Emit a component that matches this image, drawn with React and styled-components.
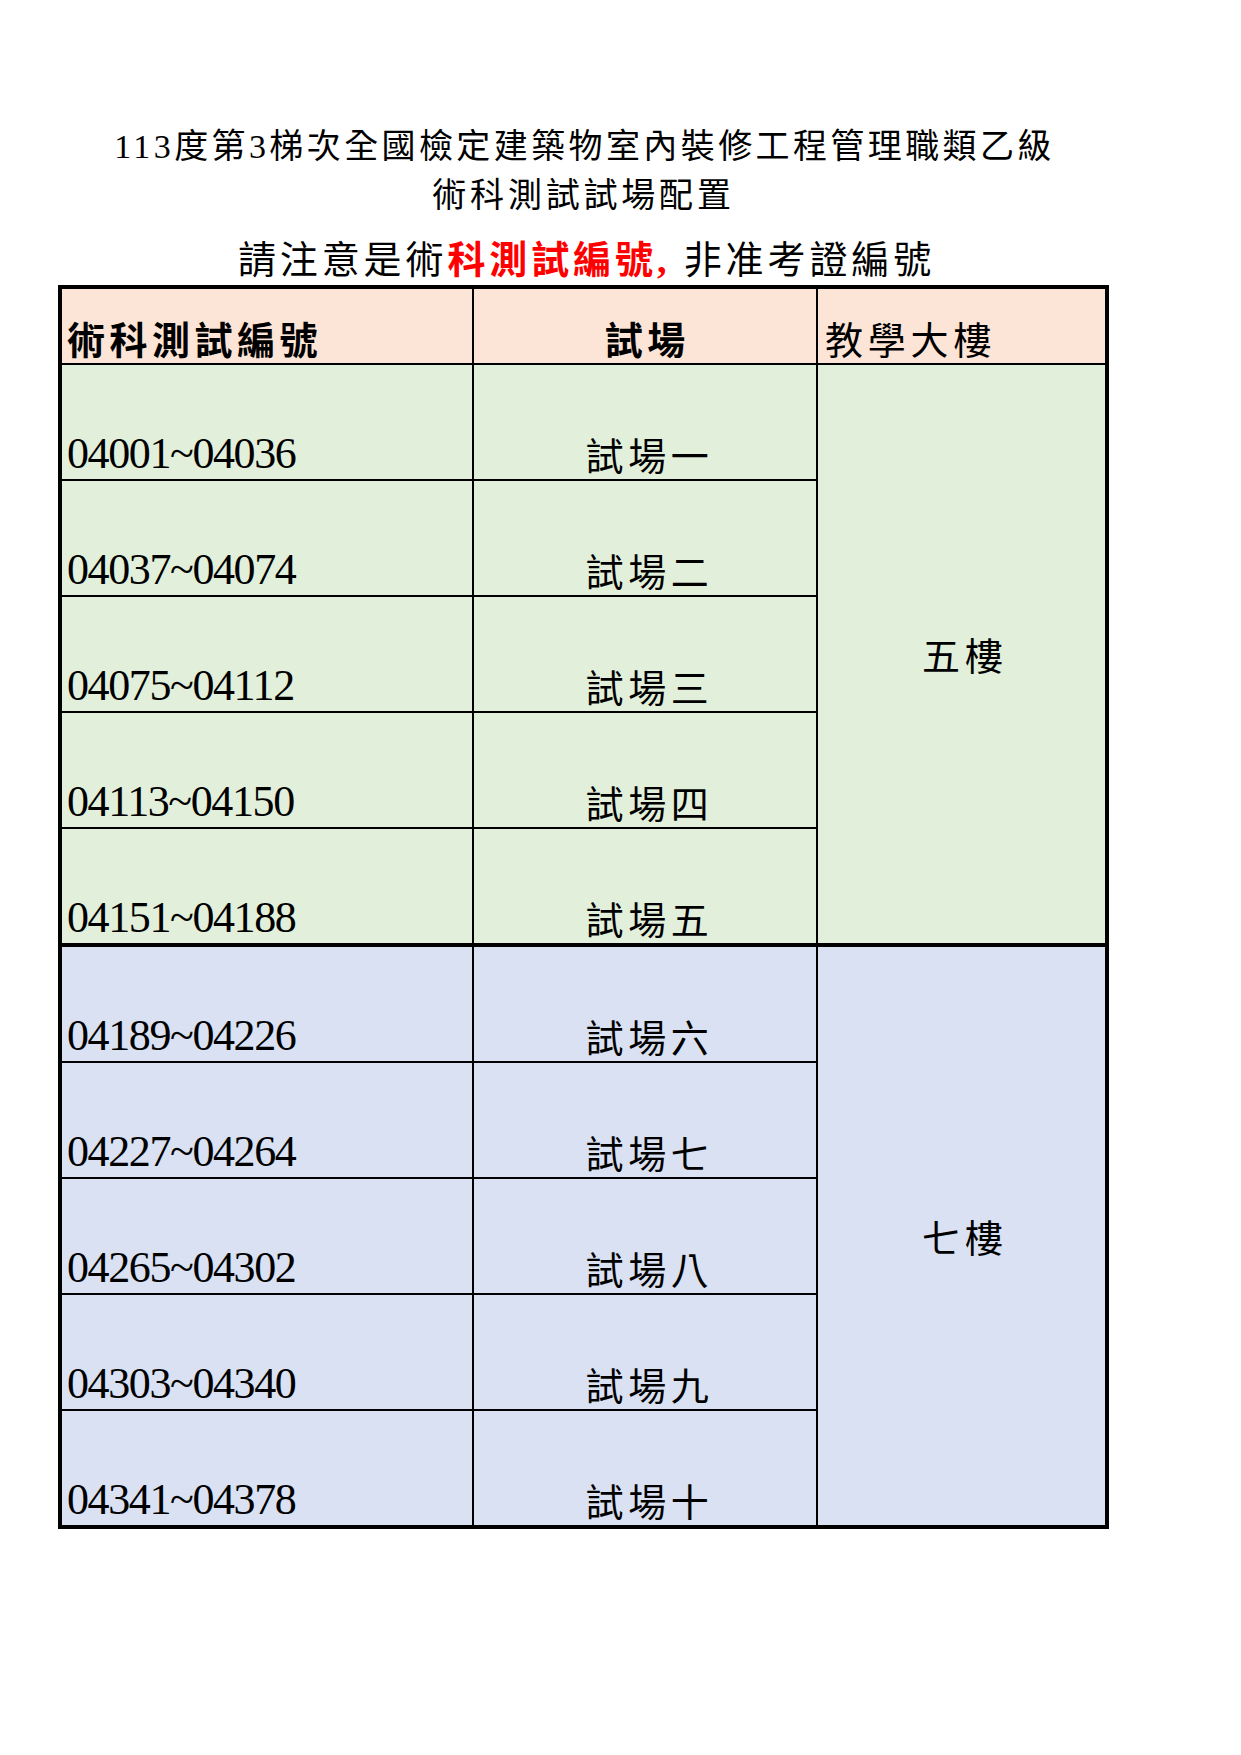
import React from "react";
import styled, { createGlobalStyle } from "styled-components";

const GlobalStyle = createGlobalStyle`
  html, body { margin: 0; padding: 0; background: #ffffff; }
  body { font-family: "Liberation Serif", "Noto Sans CJK TC", serif; color: #000; }
`;

const FONT = `"Liberation Serif", "Noto Sans CJK TC", serif`;

const Sheet = styled.div`
  width: 1051px;
  margin-left: 58px;
  padding-top: 127px;
  font-family: ${FONT};
`;

const TitleLine = styled.div`
  height: 40px;
  line-height: 40px;
  text-align: center;
  font-size: ${(p) => p.$size}px;
  letter-spacing: ${(p) => p.$spacing}px;
  margin-top: ${(p) => p.$gap || 0}px;
  padding-left: ${(p) => p.$shift || 0}px;
  white-space: nowrap;
`;

const Alert = styled.span`
  color: #ff0000;
  font-weight: 700;
`;

const Table = styled.div`
  margin-top: 5px;
  border: 4px solid #000;
  background: #000;
  display: flex;
  flex-direction: column;
`;

const COLS = "410px 342px 287px";

const HeaderRow = styled.div`
  display: grid;
  grid-template-columns: ${COLS};
  column-gap: 2px;
  height: 74px;
`;

const Group = styled.div`
  display: grid;
  grid-template-columns: ${COLS};
  grid-template-rows: repeat(5, 114px);
  gap: 2px;
  margin-top: ${(p) => p.$sep}px;
`;

const tones = {
  header: "#fce4d6",
  green: "#e2efda",
  blue: "#d9e1f2",
};

const Cell = styled.div`
  background: ${(p) => tones[p.$tone]};
  display: flex;
  align-items: flex-end;
  justify-content: ${(p) => (p.$center ? "center" : "flex-start")};
  padding: 0 0 3px ${(p) => (p.$center ? 0 : p.$indent || 5)}px;
  box-sizing: border-box;
  line-height: 1;
  white-space: nowrap;
`;

const HeadText = styled.span`
  font-size: 38px;
  font-weight: ${(p) => (p.$bold ? 700 : 400)};
  letter-spacing: ${(p) => (p.$bold ? 4.5 : 4.8)}px;
  padding-left: ${(p) => (p.$center ? 4.5 : 0)}px;
`;

const RangeText = styled.span`
  font-size: 44px;
  letter-spacing: -1.4px;
`;

const RoomText = styled.span`
  font-size: 38px;
  letter-spacing: 4.6px;
  padding-left: 9px;
`;

const BuildingCell = styled.div`
  grid-column: 3;
  grid-row: 1 / span 5;
  background: ${(p) => tones[p.$tone]};
  display: flex;
  align-items: center;
  justify-content: center;
  font-size: 38px;
  letter-spacing: 5px;
  padding: 6px 0 0 7px;
  box-sizing: border-box;
  line-height: 1;
`;

const groups = [
  {
    tone: "green",
    floor: "五樓",
    rows: [
      ["04001~04036", "試場一"],
      ["04037~04074", "試場二"],
      ["04075~04112", "試場三"],
      ["04113~04150", "試場四"],
      ["04151~04188", "試場五"],
    ],
  },
  {
    tone: "blue",
    floor: "七樓",
    rows: [
      ["04189~04226", "試場六"],
      ["04227~04264", "試場七"],
      ["04265~04302", "試場八"],
      ["04303~04340", "試場九"],
      ["04341~04378", "試場十"],
    ],
  },
];

export default function App() {
  return (
    <>
      <GlobalStyle />
      <Sheet>
        <TitleLine $size={34} $spacing={3.4} $shift={2}>
          113度第3梯次全國檢定建築物室內裝修工程管理職類乙級
        </TitleLine>
        <TitleLine $size={34} $spacing={3.8} $gap={9}>
          術科測試試場配置
        </TitleLine>
        <TitleLine $size={38} $spacing={3.9} $gap={24} $shift={6}>
          請注意是術<Alert>科測試編號,</Alert> 非准考證編號
        </TitleLine>
        <Table>
          <HeaderRow>
            <Cell $tone="header">
              <HeadText $bold>術科測試編號</HeadText>
            </Cell>
            <Cell $tone="header" $center>
              <HeadText $bold $center>試場</HeadText>
            </Cell>
            <Cell $tone="header" $indent={7}>
              <HeadText>教學大樓</HeadText>
            </Cell>
          </HeaderRow>
          {groups.map((g, gi) => (
            <Group key={g.floor} $sep={gi === 0 ? 2 : 4}>
              <BuildingCell $tone={g.tone}>{g.floor}</BuildingCell>
              {g.rows.map(([range, room]) => (
                <React.Fragment key={range}>
                  <Cell $tone={g.tone}>
                    <RangeText>{range}</RangeText>
                  </Cell>
                  <Cell $tone={g.tone} $center>
                    <RoomText>{room}</RoomText>
                  </Cell>
                </React.Fragment>
              ))}
            </Group>
          ))}
        </Table>
      </Sheet>
    </>
  );
}
